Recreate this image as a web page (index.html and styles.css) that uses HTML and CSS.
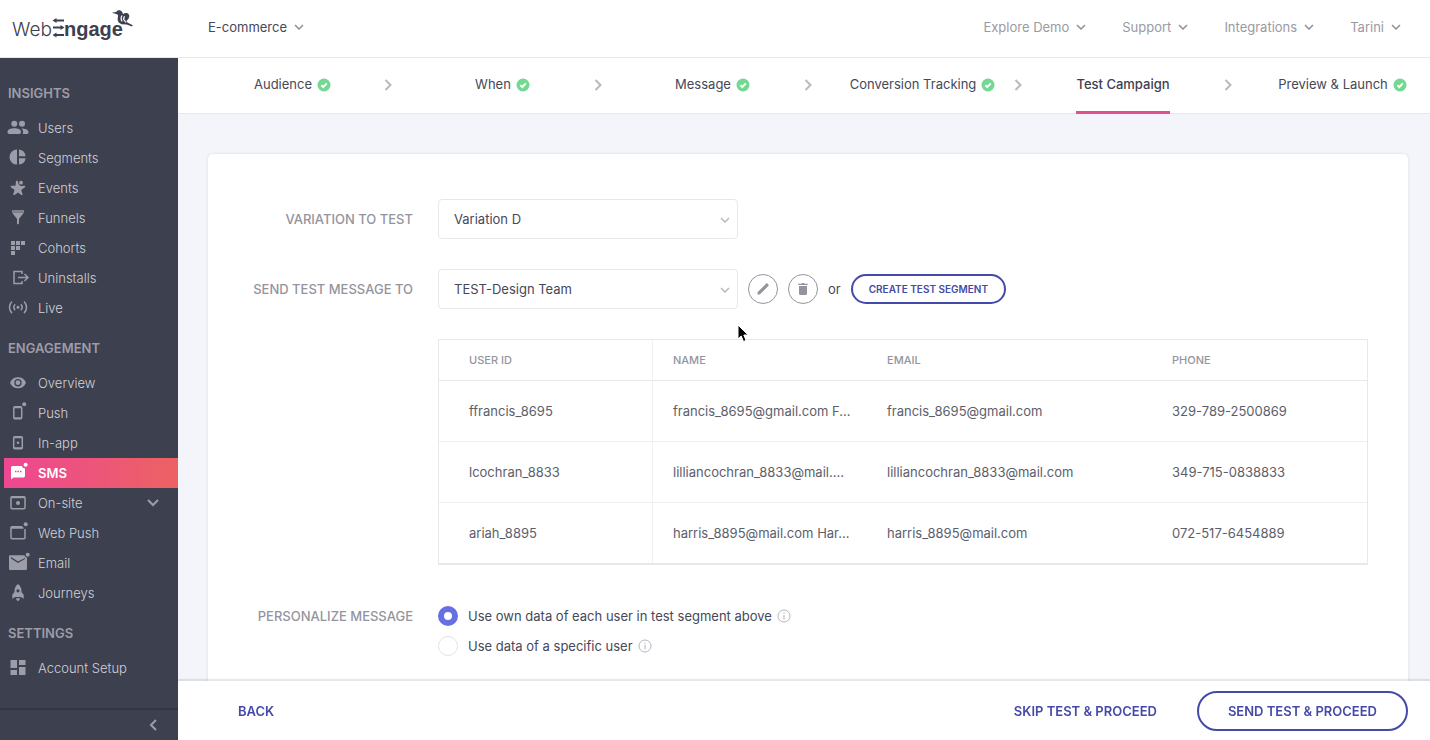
FILE: index.html
```html
<!DOCTYPE html>
<html lang="en">
<head>
    <meta charset="UTF-8">
    <meta name="viewport" content="width=device-width, initial-scale=1.0">
    <title>WebEngage - Test Campaign</title>
    <link rel="stylesheet" href="styles.css">
</head>
<body>
    <!-- Header -->
    <header class="topbar">
        <a href="#" class="logo" aria-label="WebEngage">
            <svg width="124" height="34" viewBox="0 0 124 34">
                <text class="logo-thin" x="0" y="26">Web</text>
                <text class="logo-bold" x="52" y="26">ngage</text>
                <path d="M43 10.500h9M41 17.500h8M43 25h9" stroke="#3d404e" stroke-width="2" fill="none"/>
                <path d="M40.500 10.500l4-2.500v5zM52.500 17.500l-4-2.500v5zM40.500 25l4-2.500v5z" fill="#3d404e"/>
                <path d="M100.500 2.500l3.700-.5c.8-1.500 2.600-2.200 4.300-1.400 1.600.8 2.200 2.400 2.700 4.100l2.300 4.500c.4 2 1.500 3.300 3.300 4l4 2.100-1 1.300-5-2-5.200-.4c-3-1-4.300-3-3.900-5.800l.4-3c-.4-1.300-2.800-1.900-5.600-2.400z" fill="#3d404e"/>
                <path d="M110.500 5.200c.8-1.900 2.600-2.700 4.500-2.100 2.200.8 2.900 3.200 1.700 5.200l-2.700 3.500-2.500-2.800z" fill="#3d404e"/>
                <path d="M110 5.500c-1.200 2-1.300 4 .2 5.800M114 12.500l-2.500-3.300 1-3" stroke="#fff" stroke-width="1.200" fill="none"/>
            </svg>
        </a>
        <button class="menu project-menu">E-commerce
            <svg class="caret" width="10" height="6" viewBox="0 0 10 6"><path d="M1 1l4 4 4-4"/></svg>
        </button>
        <nav class="top-menus">
            <button class="menu">Explore Demo <svg class="caret" width="10" height="6" viewBox="0 0 10 6"><path d="M1 1l4 4 4-4"/></svg></button>
            <button class="menu">Support <svg class="caret" width="10" height="6" viewBox="0 0 10 6"><path d="M1 1l4 4 4-4"/></svg></button>
            <button class="menu">Integrations <svg class="caret" width="10" height="6" viewBox="0 0 10 6"><path d="M1 1l4 4 4-4"/></svg></button>
            <button class="menu">Tarini <svg class="caret" width="10" height="6" viewBox="0 0 10 6"><path d="M1 1l4 4 4-4"/></svg></button>
        </nav>
    </header>

    <div class="layout">
        <!-- Sidebar -->
        <aside class="sidebar">
            <nav class="side-nav">
                <h2>INSIGHTS</h2>
                <a href="#">
                    <svg class="icon" viewBox="0 0 20 20"><circle cx="6.300" cy="5.700" r="3"/><circle cx="14" cy="5.700" r="3"/><path d="M-.5 14c0-2.700 3.500-3.700 6.800-3.700s6.700 1 6.700 3.700c0 1.300-.7 2-1.800 2H1.300c-1.200 0-1.800-.7-1.800-2zM13.300 10.500c3.600 0 7.200 1 7.200 3.700 0 1.200-.7 1.800-1.700 1.800h-4c.8-2.500.3-4.300-1.500-5.500z"/></svg>
                    Users
                </a>
                <a href="#">
                    <svg class="icon" viewBox="0 0 20 20"><path d="M9 1.600v15A7.500 7.500 0 0 1 9 1.600zM11 1.600a7.500 7.500 0 0 1 6.600 6.600H11zM11 10.200h6.600a7.500 7.500 0 0 1-6.600 6.400z"/></svg>
                    Segments
                </a>
                <a href="#">
                    <svg class="icon" viewBox="0 0 20 20"><circle cx="13" cy="4.700" r="1.900"/><path d="M8 3l1.500-.6 1.200 3.800 1.800 1.700 4.500-.2.300 1.200-4.100 3.100 1.500 4.600-1.100.6L10 14.400l-3.800 2.800-1.100-.6 1.500-4.700-4-3 .3-1.200 4.600.1z"/></svg>
                    Events
                </a>
                <a href="#">
                    <svg class="icon" viewBox="0 0 20 20"><path opacity=".7" d="M4 2h12v2.500H4z"/><path d="M4 4.500h12L11 11v4.500L9 16.500V11z"/></svg>
                    Funnels
                </a>
                <a href="#">
                    <svg class="icon" viewBox="0 0 20 20"><path d="M3 3h4v4H3zM8 3h4v4H8zM13 3h4v4h-4zM3 8h4v4H3zM8 8h4v4H8zM3 13h4v4H3z"/></svg>
                    Cohorts
                </a>
                <a href="#">
                    <svg class="icon outline" viewBox="0 0 20 20"><path d="M14 6V3.500H6v12h8V13M10 9.500h9.500M16.500 6l3.500 3.500-3.500 3.500"/></svg>
                    Uninstalls
                </a>
                <a href="#">
                    <svg class="icon outline" viewBox="0 0 20 20"><circle cx="10" cy="9.300" r=".8"/><path d="M7.200 6.300c-1.700 1.800-1.700 4.200 0 6M12.800 6.300c1.700 1.800 1.700 4.200 0 6M4 3.500c-3.400 3.300-3.400 8.300 0 11.600M16 3.500c3.400 3.300 3.400 8.300 0 11.600"/></svg>
                    Live
                </a>

                <h2>ENGAGEMENT</h2>
                <a href="#">
                    <svg class="icon" viewBox="0 0 20 20"><path fill-rule="evenodd" d="M2 9.700C3.500 6 6.500 4.200 10 4.200s6.500 1.800 8 5.500c-1.500 3.700-4.500 5.500-8 5.500S3.500 13.400 2 9.700zM10 6a3.700 3.700 0 1 0 0 7.400A3.700 3.700 0 0 0 10 6z"/><circle cx="10" cy="9.700" r="2.400"/></svg>
                    Overview
                </a>
                <a href="#">
                    <svg class="icon outline" viewBox="0 0 20 20"><path d="M12.500 3.800H7A1.200 1.200 0 0 0 5.800 5v9.500A1.200 1.200 0 0 0 7 15.700h5.500a1.200 1.200 0 0 0 1.200-1.200V5a1.200 1.200 0 0 0-1.200-1.200zM6 4.500h7.500M6 15h7.500"/><circle class="dot" cx="16.200" cy="1.200" r="2"/></svg>
                    Push
                </a>
                <a href="#">
                    <svg class="icon outline" viewBox="0 0 20 20"><rect x="5.700" y="3.700" width="8.600" height="12" rx="1"/><path d="M5.700 4.500h8.600M5.700 15h8.600"/><circle class="dot" cx="10" cy="9.700" r="1.300"/></svg>
                    In-app
                </a>
                <a href="#" class="active">
                    <svg class="icon" viewBox="0 0 20 20"><path fill-rule="evenodd" d="M4.500 3h9.300a3.600 3.600 0 0 0 3.200 2.600V13a1.400 1.400 0 0 1-1.400 1.400H5.500L3 16.500v-12A1.500 1.500 0 0 1 4.500 3zM7 7.800v1.500h1.500V7.800zM9.500 7.800v1.500H11V7.800zM12 7.800v1.500h1.500V7.800z"/><circle cx="17.600" cy="1.800" r="2"/></svg>
                    SMS
                </a>
                <a href="#">
                    <svg class="icon outline" viewBox="0 0 20 20"><rect x="3" y="3.700" width="14" height="12" rx="1"/><path d="M3 4.500h14"/><circle class="dot" cx="10" cy="9.900" r="2"/></svg>
                    On-site
                    <svg class="expand" width="12" height="8" viewBox="0 0 12 8"><path d="M1 1l5 5 5-5"/></svg>
                </a>
                <a href="#">
                    <svg class="icon outline" viewBox="0 0 20 20"><path d="M14.500 3.700H4A1 1 0 0 0 3 4.700v10a1 1 0 0 0 1 1h12a1 1 0 0 0 1-1V6M3 5h12.500"/><circle class="dot" cx="17.700" cy="1.300" r="2"/></svg>
                    Web Push
                </a>
                <a href="#">
                    <svg class="icon" viewBox="0 0 20 20"><path fill-rule="evenodd" d="M2 2.200h14.500c.3 1.200 1 2 2.500 2.500v11A1.300 1.300 0 0 1 17.700 17H2.300A1.300 1.300 0 0 1 1 15.700V3.200a1 1 0 0 1 1-1zM3 4v1.500L10 10l7-4V5l-7 3.500z"/><circle cx="19.700" cy="1.700" r="2"/></svg>
                    Email
                </a>
                <a href="#">
                    <svg class="icon" viewBox="0 0 20 20"><path fill-rule="evenodd" d="M10 1c2.600 2 3.700 4.600 3.500 8l2.200 2.700v4L12.800 14H7.200l-2.900 1.700v-4L6.500 9C6.300 5.600 7.400 3 10 1zM10 6.200a1.600 1.600 0 1 0 0 3.200 1.600 1.600 0 0 0 0-3.200z"/><path d="M8 15.300h4c0 1.200-.8 2.200-2 3-1.200-.8-2-1.800-2-3z"/></svg>
                    Journeys
                </a>

                <h2>SETTINGS</h2>
                <a href="#">
                    <svg class="icon" viewBox="0 0 20 20"><path d="M2.500 2H9v8H2.500zM11 2h6.500v5H11zM2.500 12H9v5H2.500zM11 9h6.500v8H11z"/></svg>
                    Account Setup
                </a>
            </nav>
            <button class="collapse" aria-label="Collapse menu">
                <svg width="8" height="12" viewBox="0 0 8 12"><path d="M7 1L2 6l5 5"/></svg>
            </button>
        </aside>

        <!-- Main -->
        <main class="main">
            <nav class="steps">
                <a href="#" class="step">
                    <span class="step-name">Audience</span>
                    <svg class="check" viewBox="0 0 14 14"><circle cx="7" cy="7" r="6.500"/><path d="M4.300 7.200l2 1.800 3.500-3.600"/></svg>
                    <svg class="next" viewBox="0 0 8 12"><path d="M1.500 1l5 5-5 5"/></svg>
                </a>
                <a href="#" class="step">
                    <span class="step-name">When</span>
                    <svg class="check" viewBox="0 0 14 14"><circle cx="7" cy="7" r="6.500"/><path d="M4.300 7.200l2 1.800 3.500-3.600"/></svg>
                    <svg class="next" viewBox="0 0 8 12"><path d="M1.500 1l5 5-5 5"/></svg>
                </a>
                <a href="#" class="step">
                    <span class="step-name">Message</span>
                    <svg class="check" viewBox="0 0 14 14"><circle cx="7" cy="7" r="6.500"/><path d="M4.300 7.200l2 1.800 3.500-3.600"/></svg>
                    <svg class="next" viewBox="0 0 8 12"><path d="M1.500 1l5 5-5 5"/></svg>
                </a>
                <a href="#" class="step">
                    <span class="step-name">Conversion Tracking</span>
                    <svg class="check" viewBox="0 0 14 14"><circle cx="7" cy="7" r="6.500"/><path d="M4.300 7.200l2 1.800 3.500-3.600"/></svg>
                    <svg class="next" viewBox="0 0 8 12"><path d="M1.500 1l5 5-5 5"/></svg>
                </a>
                <a href="#" class="step current">
                    <span class="step-name">Test Campaign</span>
                    <svg class="next" viewBox="0 0 8 12"><path d="M1.500 1l5 5-5 5"/></svg>
                </a>
                <a href="#" class="step">
                    <span class="step-name">Preview &amp; Launch</span>
                    <svg class="check" viewBox="0 0 14 14"><circle cx="7" cy="7" r="6.500"/><path d="M4.300 7.200l2 1.800 3.500-3.600"/></svg>
                </a>
            </nav>

            <div class="content">
                <form class="card" id="test-form">
                    <div class="field">
                        <label class="field-label" for="variation">VARIATION TO TEST</label>
                        <div class="select">
                            <select id="variation">
                                <option>Variation D</option>
                            </select>
                            <svg class="caret" width="10" height="6" viewBox="0 0 10 6"><path d="M1 1l4 4 4-4"/></svg>
                        </div>
                    </div>

                    <div class="field">
                        <label class="field-label" for="segment">SEND TEST MESSAGE TO</label>
                        <div class="segment-row">
                            <div class="select">
                                <select id="segment">
                                    <option>TEST-Design Team</option>
                                </select>
                                <svg class="caret" width="10" height="6" viewBox="0 0 10 6"><path d="M1 1l4 4 4-4"/></svg>
                            </div>
                            <button type="button" class="round-btn" aria-label="Edit segment">
                                <svg width="14" height="14" viewBox="0 0 14 14"><path d="M1.500 12.500v-2.300l7.800-7.800 2.300 2.300-7.800 7.800zM9.300 2.400l.8-.8c.4-.4.900-.4 1.300 0l1 1c.4.400.4.900 0 1.300l-.8.800z"/></svg>
                            </button>
                            <button type="button" class="round-btn" aria-label="Delete segment">
                                <svg width="14" height="14" viewBox="0 0 14 14"><path d="M3 4h8v7.500a1.500 1.500 0 0 1-1.500 1.500h-5A1.500 1.500 0 0 1 3 11.500zM2.300 1.800h3l.7-.8h2l.7.8h3V3H2.300z"/></svg>
                            </button>
                            <span>or</span>
                            <button type="button" class="pill-btn small">CREATE TEST SEGMENT</button>
                        </div>
                    </div>

                    <table class="users">
                        <colgroup>
                            <col class="col-id">
                            <col class="col-name">
                            <col>
                            <col class="col-phone">
                        </colgroup>
                        <thead>
                            <tr><th>USER ID</th><th>NAME</th><th>EMAIL</th><th>PHONE</th></tr>
                        </thead>
                        <tbody>
                            <tr><td>ffrancis_8695</td><td>francis_8695@gmail.com F...</td><td>francis_8695@gmail.com</td><td>329-789-2500869</td></tr>
                            <tr><td>lcochran_8833</td><td>lilliancochran_8833@mail....</td><td>lilliancochran_8833@mail.com</td><td>349-715-0838833</td></tr>
                            <tr><td>ariah_8895</td><td>harris_8895@mail.com Har...</td><td>harris_8895@mail.com</td><td>072-517-6454889</td></tr>
                        </tbody>
                    </table>

                    <div class="field personalize" role="radiogroup" aria-labelledby="personalize-label">
                        <span class="field-label" id="personalize-label">PERSONALIZE MESSAGE</span>
                        <div class="radios">
                            <label class="radio">
                                <input type="radio" name="personalize" checked>
                                Use own data of each user in test segment above
                                <svg class="info" viewBox="0 0 14 14"><circle cx="7" cy="7" r="6"/><path d="M7 6v4.500M7 3.500v1.300"/></svg>
                            </label>
                            <label class="radio">
                                <input type="radio" name="personalize">
                                Use data of a specific user
                                <svg class="info" viewBox="0 0 14 14"><circle cx="7" cy="7" r="6"/><path d="M7 6v4.500M7 3.500v1.300"/></svg>
                            </label>
                        </div>
                    </div>
                </form>
            </div>

            <!-- Footer actions -->
            <footer class="actions">
                <button class="text-btn">BACK</button>
                <div class="actions-right">
                    <button class="text-btn">SKIP TEST &amp; PROCEED</button>
                    <button class="pill-btn">SEND TEST &amp; PROCEED</button>
                </div>
            </footer>
        </main>
    </div>

    <!-- Mouse pointer -->
    <svg class="pointer" width="14" height="20" viewBox="0 0 14 20"><path d="M1 1v14l3.200-3 2.300 5.500 2.600-1.100L6.800 11h4.400z"/></svg>
</body>
</html>
```
FILE: styles.css
```css
:root {
    --dark: #3d404e;
    --text: #464857;
    --muted: #94949e;
    --primary: #4549a8;
    --border: #e6e8ea;
    --pink: #e0508f;
}
* {
    margin: 0;
    padding: 0;
    box-sizing: border-box;
}
body {
    display: flex;
    flex-direction: column;
    height: 100vh;
    overflow: hidden;
    font-family: Inter, "Liberation Sans", sans-serif;
    font-size: 13px;
    line-height: 20px;
    color: var(--text);
    background: #fff;
}
button, select {
    font: inherit;
    color: inherit;
    background: none;
    border: none;
    cursor: pointer;
}
a {
    color: inherit;
    text-decoration: none;
}
svg {
    flex: none;
}

/* Header */
.topbar {
    display: flex;
    align-items: center;
    height: 58px;
    flex: none;
    padding: 0 29px 4px 12px;
    border-bottom: 1px solid #e8e8ec;
}
.logo {
    width: 196px;
    height: 34px;
}
.logo text {
    fill: var(--dark);
}
.logo-thin {
    font-size: 19px;
    font-weight: 300;
}
.logo-bold {
    font-family: "Liberation Sans", sans-serif;
    font-size: 20px;
    font-weight: 700;
}
.menu {
    display: flex;
    align-items: center;
    gap: 7px;
    color: #9a9aa3;
}
.project-menu {
    color: var(--text);
}
.top-menus {
    display: flex;
    gap: 36px;
    margin-left: auto;
}
.caret {
    fill: none;
    stroke: #8f909b;
    stroke-width: 1.5;
}

.layout {
    display: flex;
    flex: 1;
    min-height: 0;
}

/* Sidebar */
.sidebar {
    display: flex;
    flex-direction: column;
    flex: none;
    width: 178px;
    background: var(--dark);
    color: #d0d1d8;
}
.side-nav {
    flex: 1;
    min-height: 0;
    padding-top: 10px;
    overflow: hidden;
}
.side-nav h2 {
    margin-top: 5px;
    padding-left: 8px;
    font-size: 13px;
    font-weight: 600;
    line-height: 40px;
    color: #9c9da8;
}
.side-nav a {
    display: flex;
    align-items: center;
    gap: 10px;
    height: 30px;
    margin-left: 4px;
    padding-left: 4px;
    font-weight: 300;
}
.side-nav a.active {
    color: #fff;
    font-weight: 600;
    background: linear-gradient(90deg, #ee4793, #ec6262);
}
.icon {
    width: 20px;
    height: 20px;
    overflow: visible;
    fill: #9c9da8;
}
.icon.outline {
    fill: none;
    stroke: #9c9da8;
    stroke-width: 1.5;
}
.icon .dot {
    fill: #9c9da8;
    stroke: none;
}
.active .icon {
    fill: #fff;
}
.expand {
    margin-left: auto;
    margin-right: 19px;
}
.expand, .collapse svg {
    fill: none;
    stroke: #9c9da8;
    stroke-width: 2;
}
.collapse {
    display: flex;
    align-items: center;
    justify-content: flex-end;
    height: 32px;
    padding-right: 21px;
    border-top: 2px solid #333643;
}

/* Steps */
.main {
    display: flex;
    flex-direction: column;
    flex: 1;
    min-width: 0;
}
.steps {
    display: flex;
    flex: none;
    height: 56px;
    overflow: hidden;
    box-shadow: inset 0 -1px #e6e7ec;
}
.step {
    display: grid;
    grid-template-columns: 1fr auto 1fr;
    flex: 1 0 210px;
    align-items: center;
}
.step-name {
    grid-column: 2;
    line-height: 53px;
    border-bottom: 3px solid transparent;
}
.current .step-name {
    font-weight: 500;
    color: var(--dark);
    border-bottom-color: var(--pink);
}
.step > svg {
    grid-row: 1;
    grid-column: 3;
    margin-bottom: 3px;
}
.check {
    width: 14px;
    height: 14px;
    margin-left: 5px;
    fill: #73d891;
}
.check path {
    fill: none;
    stroke: #fff;
    stroke-width: 2;
}
.next {
    width: 8px;
    height: 12px;
    justify-self: end;
    margin-right: -4px;
    overflow: visible;
    fill: none;
    stroke: #b9b9c1;
    stroke-width: 2;
}

/* Form card */
.content {
    flex: 1;
    min-height: 0;
    padding: 40px 22px 30px 30px;
    overflow: auto;
    scrollbar-width: none;
    background: #f4f5fa;
}
.card {
    padding: 45px 40px 45px 30px;
    background: #fff;
    border-radius: 5px;
    box-shadow: 0 0 3px rgba(60, 64, 80, 0.15);
}
.field {
    display: grid;
    grid-template-columns: 175px 1fr;
    column-gap: 25px;
    margin-bottom: 30px;
}
.field-label {
    font-weight: 500;
    line-height: 40px;
    text-align: right;
    color: var(--muted);
}
.select {
    position: relative;
    width: 300px;
}
.select select {
    display: block;
    width: 100%;
    height: 40px;
    padding: 0 15px;
    appearance: none;
    border: 1px solid var(--border);
    border-radius: 4px;
}
.select .caret {
    position: absolute;
    top: 18px;
    right: 8px;
    stroke: #b9b9c1;
    pointer-events: none;
}
.segment-row {
    display: flex;
    align-items: center;
    gap: 10px;
}
.round-btn {
    display: flex;
    align-items: center;
    justify-content: center;
    width: 30px;
    height: 30px;
    border: 1px solid #94949e;
    border-radius: 50%;
}
.round-btn svg {
    fill: #94949e;
}
.pill-btn {
    height: 40px;
    padding: 0 29px;
    font-weight: 600;
    color: var(--primary);
    border: 2px solid var(--primary);
    border-radius: 20px;
}
.pill-btn.small {
    height: 30px;
    padding: 0 16px;
    font-size: 10px;
}

/* Users table */
.users {
    width: calc(100% - 200px);
    margin-left: 200px;
    table-layout: fixed;
    border-collapse: separate;
    border-spacing: 0;
    border: 1px solid var(--border);
    border-bottom-width: 2px;
}
.col-id, .col-name {
    width: 214px;
}
.col-phone {
    width: 215px;
}
.users th, .users td {
    height: 61px;
    padding: 0 10px 0 20px;
    overflow: hidden;
    white-space: nowrap;
    text-overflow: ellipsis;
    text-align: left;
    border-bottom: 1px solid #eff0f2;
}
.users th {
    height: 41px;
    font-size: 11px;
    font-weight: 500;
    color: var(--muted);
    border-bottom-color: var(--border);
}
.users td {
    color: #5c5e6b;
}
.users tr > :first-child {
    padding-left: 30px;
    border-right: 1px solid #eff0f2;
}
.users tbody tr:last-child td {
    height: 60px;
    border-bottom: none;
}

/* Radios */
.personalize {
    margin: 41px 0 0;
}
.personalize .field-label {
    line-height: 20px;
}
.radios {
    display: flex;
    flex-direction: column;
    align-items: flex-start;
    gap: 10px;
}
.radio {
    display: flex;
    align-items: center;
}
.radio input {
    width: 20px;
    height: 20px;
    margin-right: 10px;
    appearance: none;
    border: 1px solid #e3e3e8;
    border-radius: 50%;
}
.radio input:checked {
    border: 6px solid #6670e3;
}
.info {
    width: 14px;
    height: 14px;
    margin-left: 5px;
    fill: none;
    stroke: #b5b5bd;
}

/* Footer actions */
.actions {
    position: relative;
    display: flex;
    align-items: center;
    justify-content: space-between;
    flex: none;
    padding: 10px 22px 9px 60px;
    background: #fff;
    box-shadow: 0 -2px 1px rgba(60, 64, 80, 0.12);
}
.actions-right {
    display: flex;
    gap: 40px;
}
.text-btn {
    font-weight: 600;
    color: var(--primary);
}

.pointer {
    position: absolute;
    top: 324px;
    left: 737px;
    fill: #000;
    stroke: #fff;
    pointer-events: none;
}
```
